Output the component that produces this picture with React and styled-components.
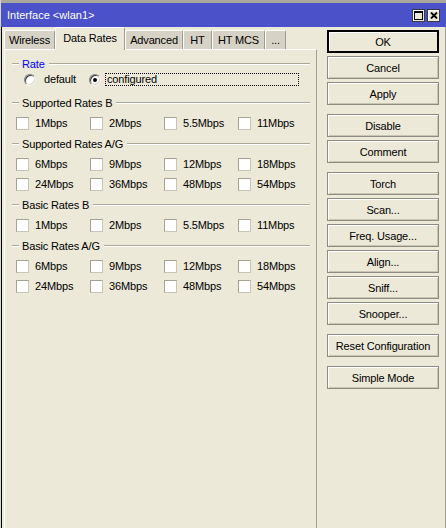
import React from 'react'
import styled, { createGlobalStyle } from 'styled-components'

const GlobalStyle = createGlobalStyle`
  * { box-sizing: border-box; }
  html, body { margin: 0; padding: 0; background: #ECE9D8; }
  body {
    font-family: "Liberation Sans", Arial, sans-serif;
    font-size: 11px;
    letter-spacing: -0.15px;
    color: #000;
  }
`

const tabs = [
  { name: 'Wireless', w: 51 },
  { name: 'Data Rates', w: 70, active: true },
  { name: 'Advanced', w: 58 },
  { name: 'HT', w: 29 },
  { name: 'HT MCS', w: 53 },
  { name: '...', w: 21 }
]

const rateGroups = [
  { title: 'Supported Rates B', rows: [['1Mbps', '2Mbps', '5.5Mbps', '11Mbps']] },
  { title: 'Supported Rates A/G', rows: [['6Mbps', '9Mbps', '12Mbps', '18Mbps'], ['24Mbps', '36Mbps', '48Mbps', '54Mbps']] },
  { title: 'Basic Rates B', rows: [['1Mbps', '2Mbps', '5.5Mbps', '11Mbps']] },
  { title: 'Basic Rates A/G', rows: [['6Mbps', '9Mbps', '12Mbps', '18Mbps'], ['24Mbps', '36Mbps', '48Mbps', '54Mbps']] }
]

const buttonGroups = [
  [{ label: 'OK', primary: true }, { label: 'Cancel' }, { label: 'Apply' }],
  [{ label: 'Disable' }, { label: 'Comment' }],
  [{ label: 'Torch' }, { label: 'Scan...' }, { label: 'Freq. Usage...' }, { label: 'Align...' }, { label: 'Sniff...' }, { label: 'Snooper...' }],
  [{ label: 'Reset Configuration' }],
  [{ label: 'Simple Mode' }]
]

export default function App () {
  return (
    <Window>
      <GlobalStyle />
      <TitleBar>
        <Title>Interface &lt;wlan1&gt;</Title>
        <TitleButtons>
          <TitleButton>
            <svg width="9" height="9" viewBox="0 0 9 9">
              <rect x="0.5" y="0.5" width="8" height="8" fill="none" stroke="#000" />
              <rect x="0" y="0" width="9" height="2" fill="#000" />
            </svg>
          </TitleButton>
          <TitleButton>
            <svg width="8" height="7" viewBox="0 0 8 7">
              <path d="M1 0.5 L7 6.5 M7 0.5 L1 6.5" stroke="#000" strokeWidth="1.8" />
            </svg>
          </TitleButton>
        </TitleButtons>
      </TitleBar>
      <Body>
        <LeftPane>
          <TabStrip>
            {tabs.map(t => (
              <Tab key={t.name} $w={t.w} $active={t.active}>{t.name}</Tab>
            ))}
          </TabStrip>
          <Panel>
            <Group $last>
              <GroupHeader>
                <Dash />
                <GroupTitle $accent>Rate</GroupTitle>
                <Line />
              </GroupHeader>
              <RadioRow>
                <Radio />
                <RadioLabel>default</RadioLabel>
                <Radio $checked />
                <RadioLabel $focused>configured</RadioLabel>
              </RadioRow>
            </Group>
            {rateGroups.map(g => (
              <Group key={g.title}>
                <GroupHeader>
                  <Dash />
                  <GroupTitle>{g.title}</GroupTitle>
                  <Line />
                </GroupHeader>
                {g.rows.map((row, i) => (
                  <CheckRow key={i}>
                    {row.map(r => (
                      <CheckItem key={r}>
                        <Box />
                        <span>{r}</span>
                      </CheckItem>
                    ))}
                  </CheckRow>
                ))}
              </Group>
            ))}
          </Panel>
        </LeftPane>
        <RightPane>
          {buttonGroups.map((group, i) => (
            <ButtonGroup key={i}>
              {group.map(b => (
                <Button key={b.label} $primary={b.primary}>{b.label}</Button>
              ))}
            </ButtonGroup>
          ))}
        </RightPane>
      </Body>
    </Window>
  )
}

const Window = styled.div`
  width: 446px;
  height: 528px;
  display: flex;
  flex-direction: column;
  background: #ECE9D8;
  border-left: 1px solid #D8D6CC;
  overflow: hidden;
`
const TitleBar = styled.div`
  height: 27px;
  flex-shrink: 0;
  display: flex;
  align-items: center;
  padding: 0 6px 0 6px;
  background: #4B51C9;
  border-top: 3px solid #A9A79E;
  color: #fff;
`
const Title = styled.span`
  font-size: 11px;
  letter-spacing: 0;
`
const TitleButtons = styled.div`
  margin-left: auto;
  display: flex;
  gap: 2px;
`
const TitleButton = styled.div`
  width: 13px;
  height: 13px;
  display: flex;
  align-items: center;
  justify-content: center;
  background: #ECE9D8;
  border: 1px solid #3A3A3A;
  box-shadow: inset 1px 1px #fff;
`
const Body = styled.div`
  flex: 1;
  display: flex;
  border-left: 1px solid #000;
  min-height: 0;
`
const LeftPane = styled.div`
  width: 315px;
  padding-left: 2px;
  display: flex;
  flex-direction: column;
`
const TabStrip = styled.div`
  height: 22px;
  display: flex;
  align-items: flex-end;
`
const Tab = styled.div`
  width: ${p => p.$w}px;
  height: ${p => (p.$active ? 23 : 19)}px;
  margin-bottom: ${p => (p.$active ? -1 : 0)}px;
  padding-bottom: ${p => (p.$active ? 2 : 0)}px;
  position: relative;
  z-index: ${p => (p.$active ? 1 : 0)};
  display: flex;
  align-items: center;
  justify-content: center;
  white-space: nowrap;
  background: ${p => (p.$active ? '#ECE9D8' : '#D6D2C5')};
  border-top: 1px solid #fff;
  border-left: 1px solid #fff;
  border-right: 1px solid #9D9B8E;
  border-radius: 2px 2px 0 0;
`
const Panel = styled.div`
  flex: 1;
  padding-top: 3px;
  border-top: 1px solid #fff;
  border-left: 1px solid #fff;
  border-right: 1px solid #A3A195;
  display: flex;
  flex-direction: column;
`
const Group = styled.div`
  display: flex;
  flex-direction: column;
  margin-bottom: ${p => (p.$last ? 6 : 0)}px;
`
const GroupHeader = styled.div`
  height: 21px;
  display: flex;
  align-items: center;
  padding: 0 6px 0 7px;
`
const Dash = styled.div`
  width: 7px;
  height: 2px;
  border-top: 1px solid #ACA899;
  border-bottom: 1px solid #fff;
`
const Line = styled(Dash)`
  flex: 1;
  width: auto;
`
const GroupTitle = styled.span`
  margin: 0 4px 0 3px;
  color: ${p => (p.$accent ? '#0000FF' : '#000')};
  white-space: nowrap;
`
const RadioRow = styled.div`
  height: 13px;
  margin-top: -1px;
  display: flex;
  align-items: center;
  padding-left: 19px;
  padding-right: 17px;
`
const Radio = styled.div`
  width: 12px;
  height: 12px;
  flex-shrink: 0;
  border-radius: 50%;
  background: #fff;
  border: 1px solid;
  border-color: #808080 #F4F3EE #F4F3EE #808080;
  box-shadow: inset 1px 1px #404040, inset -1px -1px #D8D5C8;
  display: flex;
  align-items: center;
  justify-content: center;
  &::after {
    content: '';
    width: 4px;
    height: 4px;
    border-radius: 50%;
    background: ${p => (p.$checked ? '#000' : 'transparent')};
  }
`
const RadioLabel = styled.span`
  margin-left: ${p => (p.$focused ? 4 : 6)}px;
  margin-right: ${p => (p.$focused ? 0 : 11)}px;
  height: 13px;
  line-height: 11px;
  padding: 0 1px;
  border: 1px dotted ${p => (p.$focused ? '#000' : 'transparent')};
  flex: ${p => (p.$focused ? 1 : 'none')};
`
const CheckRow = styled.div`
  height: 20px;
  display: grid;
  grid-template-columns: repeat(4, 74px);
  align-items: center;
  padding-left: 11px;
`
const CheckItem = styled.label`
  display: flex;
  align-items: center;
  gap: 6px;
  white-space: nowrap;
`
const Box = styled.span`
  width: 13px;
  height: 13px;
  background: #fff;
  border: 1px solid;
  border-color: #A5A293 #C8C5B7 #C8C5B7 #A5A293;
`
const RightPane = styled.div`
  width: 129px;
  padding: 3px 0 0 10px;
  border-right: 1px solid #A3A195;
  display: flex;
  flex-direction: column;
  gap: 9px;
`
const ButtonGroup = styled.div`
  display: flex;
  flex-direction: column;
  gap: 3px;
`
const Button = styled.div`
  width: 112px;
  height: 23px;
  display: flex;
  align-items: center;
  justify-content: center;
  white-space: nowrap;
  background: #ECE9D8;
  border: ${p => (p.$primary ? '2px solid #000' : '1px solid #8E8C80')};
  box-shadow: ${p => (p.$primary ? 'inset 1px 1px #fff' : 'inset 1px 1px #fff, inset -1px -1px #C9C6B6')};
`
